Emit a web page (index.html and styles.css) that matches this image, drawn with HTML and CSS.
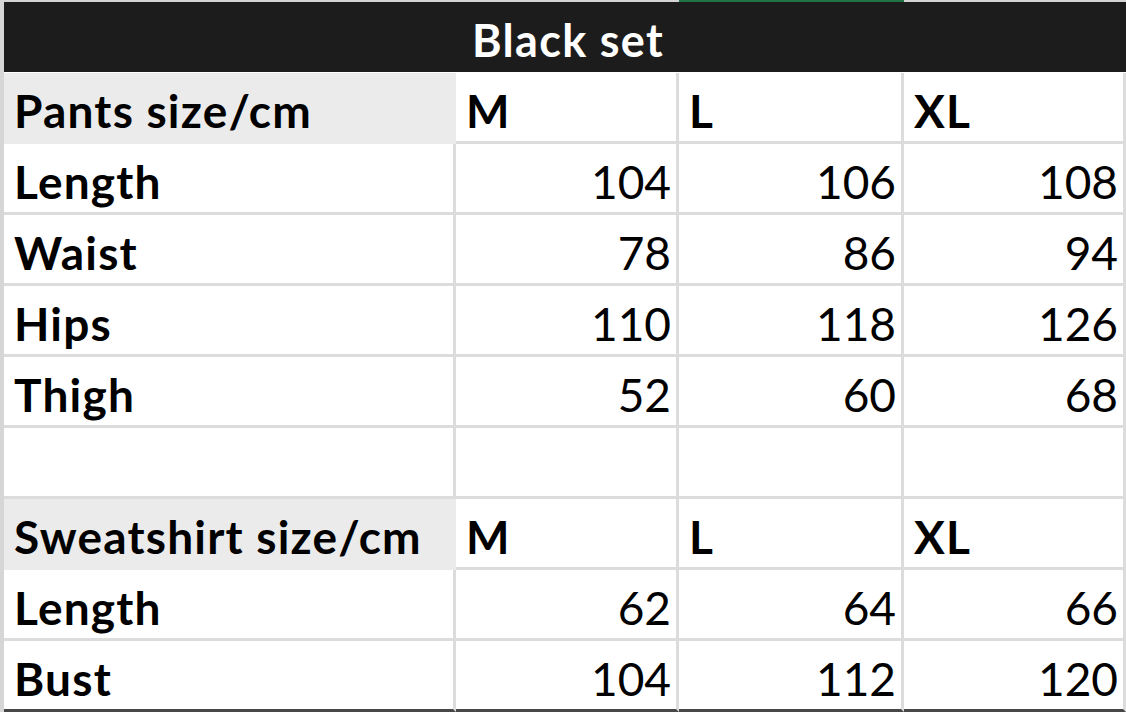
FILE: index.html
```html
<!DOCTYPE html>
<html lang="en">
<head>
<meta charset="utf-8">
<title>Black set</title>
<link rel="stylesheet" href="styles.css">
</head>
<body>
<div class="sheet">
  <div class="colbar">
    <div class="seg"></div><div class="seg"></div><div class="seg active"></div><div class="seg"></div>
  </div>
  <div class="grid">
    <div class="title">Black set</div>

    <div class="cell label fill">Pants size/cm</div>
    <div class="cell head">M</div>
    <div class="cell head">L</div>
    <div class="cell head">XL</div>

    <div class="cell label">Length</div>
    <div class="cell num">104</div>
    <div class="cell num">106</div>
    <div class="cell num">108</div>

    <div class="cell label">Waist</div>
    <div class="cell num">78</div>
    <div class="cell num">86</div>
    <div class="cell num">94</div>

    <div class="cell label">Hips</div>
    <div class="cell num">110</div>
    <div class="cell num">118</div>
    <div class="cell num">126</div>

    <div class="cell label">Thigh</div>
    <div class="cell num">52</div>
    <div class="cell num">60</div>
    <div class="cell num">68</div>

    <div class="cell"></div>
    <div class="cell"></div>
    <div class="cell"></div>
    <div class="cell"></div>

    <div class="cell label fill">Sweatshirt size/cm</div>
    <div class="cell head">M</div>
    <div class="cell head">L</div>
    <div class="cell head">XL</div>

    <div class="cell label">Length</div>
    <div class="cell num">62</div>
    <div class="cell num">64</div>
    <div class="cell num">66</div>

    <div class="cell label last">Bust</div>
    <div class="cell num last">104</div>
    <div class="cell num last">112</div>
    <div class="cell num last">120</div>
  </div>
</div>
</body>
</html>
```

FILE: styles.css
```css
html, body {
  margin: 0;
  padding: 0;
  background: #ffffff;
}

body {
  font-family: Lato, "Liberation Sans", sans-serif;
  color: #000000;
  overflow: hidden;
}

.sheet {
  width: 1126px;
  height: 712px;
  overflow: hidden;
}

.colbar {
  display: grid;
  grid-template-columns: 456px 223px 225px 1fr;
  height: 2px;
  background: #d4d4d4;
}

.seg.active {
  background: #217346;
}

.grid {
  display: grid;
  grid-template-columns: 452px 223px 225px 1fr;
  grid-auto-rows: 71px;
  border-left: 4px solid #d6d6d6;
}

.title {
  grid-column: 1 / -1;
  height: 70px;
  background: #1c1c1c;
  color: #ffffff;
  font-weight: 700;
  font-size: 45px;
  letter-spacing: 1.3px;
  line-height: 1;
  display: flex;
  align-items: flex-end;
  justify-content: center;
  padding: 0 0 9px 6px;
  box-sizing: border-box;
}

.cell {
  box-sizing: border-box;
  border-right: 3px solid #dcdcdc;
  border-bottom: 3px solid #dcdcdc;
  display: flex;
  align-items: flex-end;
  padding: 0 5px 7px 10px;
  font-size: 46px;
  line-height: 1;
  white-space: nowrap;
}

.label, .head {
  font-weight: 700;
  letter-spacing: 1.2px;
}

.num {
  justify-content: flex-end;
  font-weight: 400;
}

.fill {
  background: #ebebeb;
  border-color: #ebebeb;
}

.last {
  border-bottom: 3px solid #474747;
}
```
